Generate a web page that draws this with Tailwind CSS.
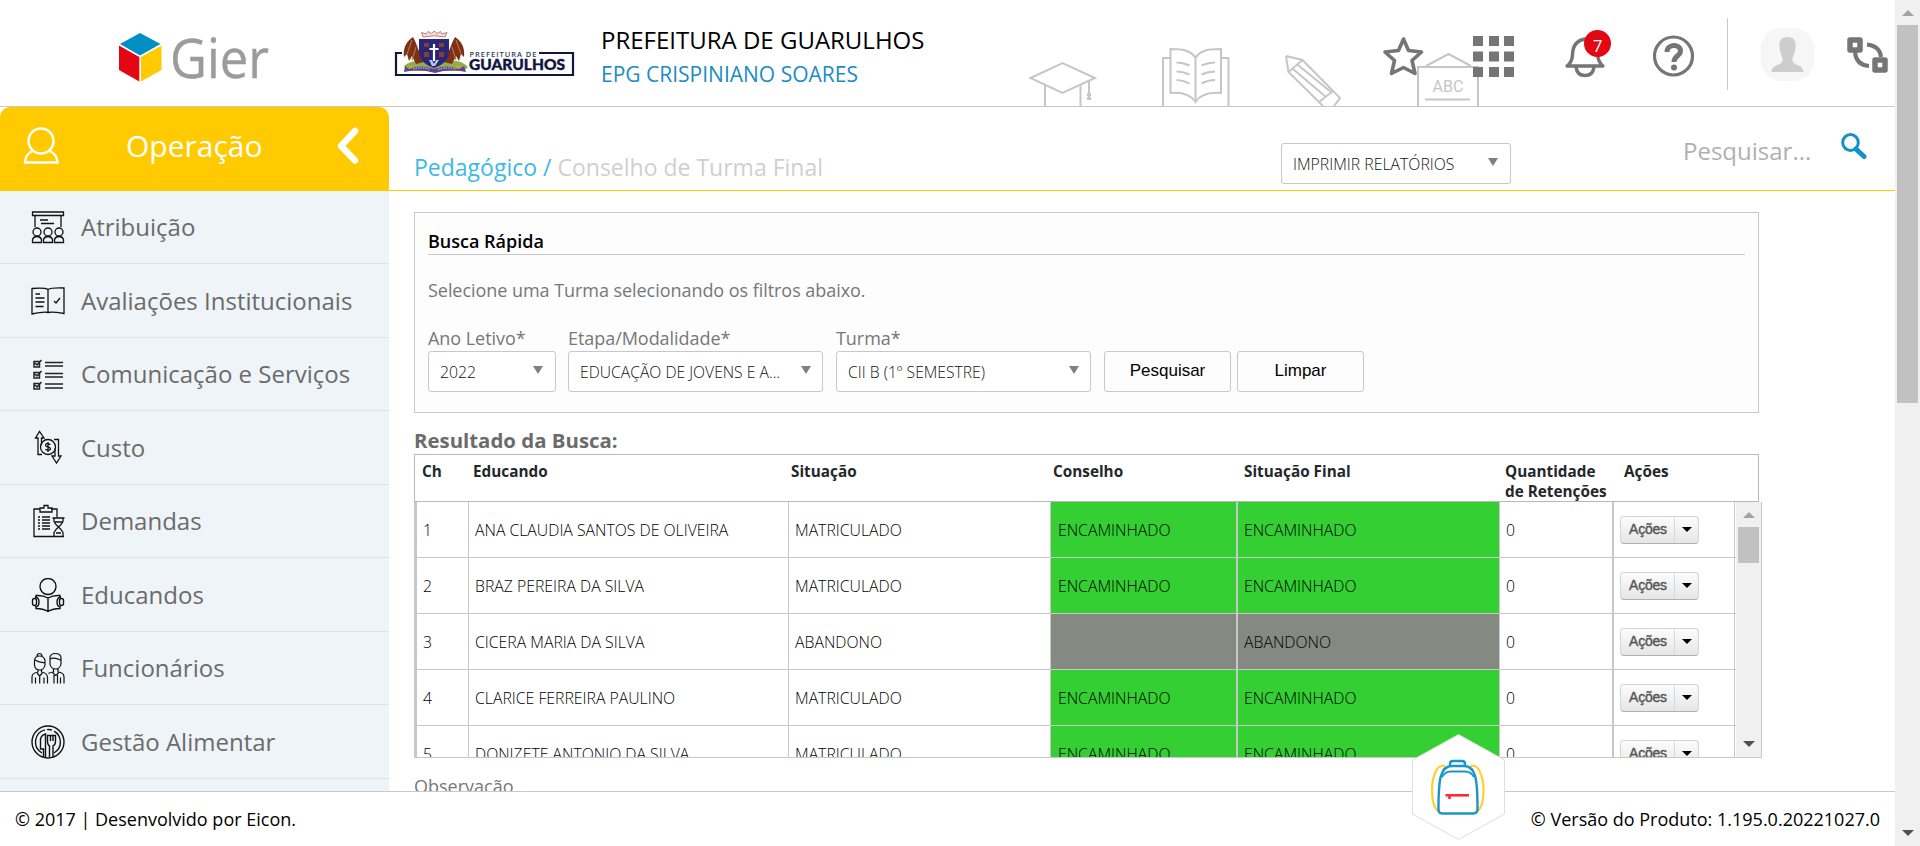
<!DOCTYPE html>
<html lang="pt-BR">
<head>
<meta charset="utf-8">
<title>Gier - Conselho de Turma Final</title>
<script src="https://cdn.jsdelivr.net/npm/@tailwindcss/browser@4"></script>
</head>
<body class="flex h-[846px] w-[1920px] overflow-hidden bg-white font-['Open_Sans','Noto_Sans',sans-serif]">
<div class="relative flex h-full w-[1895px] flex-col">

  <!-- Top bar -->
  <header class="relative flex h-[107px] shrink-0 border-b border-[#c8c8c8]">
    <!-- School line art behind the toolbar -->
    <svg class="absolute left-[1020px] top-[40px]" width="470" height="66" viewBox="1020 40 470 66" fill="none" stroke="#c6c6c6" stroke-width="2">
      <path d="M1030.500 78 L1062.500 63 L1095 78 L1062.500 93 Z M1045 85 V106 M1080.500 85 V106 M1089 81 V94 M1089 94 v6" />
      <path d="M1089 93v7" stroke-width="4" stroke-dasharray="3 1"/>
      <path d="M1195.500 58 C1191 50 1181 49 1170.500 49 V93 C1183 92 1191 95 1195.500 102 C1200 95 1209 92 1221 93 V49 C1209 49 1200 50 1195.500 58 Z M1195.500 56 V100 M1170 58 H1163 V106 M1221 58 H1228.500 V106 M1176.500 62.500 Q1183 62.500 1189.500 65.500 M1176.500 71.500 Q1183 71.500 1189.500 74.500 M1176.500 80 Q1183 80 1189.500 83.500 M1215 62.500 Q1208 62.500 1201.500 65.500 M1215 71.500 Q1208 71.500 1201.500 74.500 M1215 80 Q1208 80 1201.500 83.500"/>
      <path d="M1286 56 L1302.500 60 L1340 98 L1334 106 M1286 56 L1288.500 72 L1323 106 M1302.500 60 L1288.500 72 M1298 65 L1331 92 M1293 69 L1326 97 M1333 91 L1319 102"/>
      <path d="M1418 106 V67 H1478 V106 M1426 66 L1448.500 54 L1471 66 M1425 99.500 H1470"/>
      <text x="1432.500" y="91.500" font-family="Roboto" font-size="17" fill="#c6c6c6" stroke="none" textLength="31" lengthAdjust="spacingAndGlyphs">ABC</text>
    </svg>

    <svg class="ml-[118px] mt-8 shrink-0 overflow-visible" width="154" height="52" viewBox="118 32 154 52">
      <path d="M140 33 L160.500 44 L140 55.500 L120 44 Z" fill="#008fc5"/>
      <path d="M119 45.500 L139.300 57 V81.500 L119 70 Z" fill="#e30613"/>
      <path d="M161.500 45.500 L141 57 V81.500 L161.500 70 Z" fill="#ffcb00"/>
      <text x="170" y="78" font-family="Open Sans" font-weight="400" font-size="55" fill="#9b9b9b" stroke="#9b9b9b" stroke-width=".4" textLength="99" lengthAdjust="spacingAndGlyphs">Gier</text>
    </svg>

    <svg class="ml-[121px] mt-[29px] shrink-0" width="184" height="50" viewBox="393 29 184 50">
      <path d="M402 53 H396 V75 H573 V53 H539" fill="none" stroke="#12163f" stroke-width="2.200"/>
      <path d="M404 66 Q412 59 425 62 H447 Q459 58 468 67 L464 71 H408 Z" fill="#8fae4e"/>
      <path d="M424 62 C419 53 417 44 413 37 C405 42 403 50 404 57 L407 54 L409 61 L412 56 L416 64 Z" fill="#7a3117"/>
      <path d="M444 62 C449 53 451 44 455 37 C463 42 465 50 464 57 L461 54 L459 61 L456 56 L452 64 Z" fill="#7a3117"/>
      <path d="M412 40 L407 54 M416 47 L412 60 M456 40 L461 54 M452 47 L456 60" stroke="#bf6b38" fill="none" stroke-width="1.200"/>
      <path d="M409 66 h4 l2 5 h-6z M456 66 h4 l1 5 h-6z" fill="#d9a02c"/>
      <path d="M419 39 H449 V52 C449 61 440 66 434 68 C428 66 419 61 419 52 Z" fill="#29267a"/>
      <path d="M424 43 h5 v4 h-5z M424 52 h5 v5 h-5z M439 43 h5 v4 h-5z M439 52 h5 v5 h-5z" fill="#84402c"/>
      <path d="M434 44 V61 M429.500 49 H438.500" stroke="#fff" stroke-width="2.200"/>
      <path d="M429 60 h3 l2 4 2-4 h3 l-4 6 h-3z" fill="#b9c6df"/>
      <path d="M423 37 L421.500 32.500 L426 34 L428 31.500 L431.500 33.500 L434 31 L437 33.500 L440.500 31.500 L442 34 L447 32.500 L445 37 Q434 34.500 423 37 Z" fill="#f5dcd7" stroke="#a8665e" stroke-width=".8"/>
      <path d="M405 66 L409 69 Q420 64 434 69 Q448 64 459 69 L464 66 L466 72 Q450 68 435 73 Q419 68 404 72 Z" fill="#5d4596"/>
      <path d="M413 69 Q422 66.500 430 69.500 M438 69.500 Q448 66.500 456 69" stroke="#ded5ee" stroke-width="1" stroke-dasharray="1.500 1" fill="none"/>
      <text x="469.500" y="56.500" font-family="Open Sans" font-weight="600" font-size="7.500" fill="#34375a" textLength="67">PREFEITURA DE</text>
      <text x="469" y="69.500" font-family="Lato" font-weight="900" font-size="15.500" fill="#12163f" stroke="#12163f" stroke-width=".4" textLength="96" lengthAdjust="spacingAndGlyphs">GUARULHOS</text>
    </svg>

    <div class="ml-6 mt-[24px] flex w-[400px] flex-col whitespace-nowrap">
      <div class="h-8 text-[24px] leading-8 text-black">PREFEITURA DE GUARULHOS</div>
      <div class="mt-[2px] h-8 text-[21px] leading-8 text-[#1b8cc4]">EPG CRISPINIANO SOARES</div>
    </div>

    <div class="absolute left-[1382px] top-0 flex h-[106px] items-start">
      <svg class="mt-[35px]" width="42" height="42" viewBox="0 0 42 42" fill="none" stroke="#757575" stroke-width="3.600" stroke-linejoin="round"><path d="M21.500 4 L26.500 15.500 L39.500 17 L30 25.500 L33 38.500 L21.500 32.500 L9.500 38.500 L12.500 25.500 L3 17 L16.500 15.500 Z"/></svg>
      <svg class="ml-[49px] mt-[36px]" width="41" height="41" fill="#757575"><path d="M0 0h10v10H0z M16 0h10v10H16z M31 0h10v10H31z M0 15.500h10v10H0z M16 15.500h10v10H16z M31 15.500h10v10H31z M0 31h10v10H0z M16 31h10v10H16z M31 31h10v10H31z"/></svg>
      <div class="relative ml-[51px] mt-[29px] h-12 w-12">
        <svg class="mt-[6px]" width="42" height="44" viewBox="0 0 42 44" fill="none" stroke="#757575" stroke-width="3.400"><path d="M2 31 Q7.500 27 7.500 19 Q8 6 20 4 Q32 6 32.500 19 Q33 27 38 31 Z" stroke-linejoin="round"/><path d="M11 32 Q12 40.500 20 40.500 Q28 40.500 29 32"/></svg>
        <span class="absolute left-[19px] top-[1px] flex h-[27px] w-[27px] items-center justify-center rounded-full bg-[#e30613] pt-[3px] text-[17px] leading-none text-white">7</span>
      </div>
      <svg class="ml-[39px] mt-[35px]" width="42" height="42" viewBox="0 0 42 42" fill="none" stroke="#757575"><circle cx="21.500" cy="21" r="19" stroke-width="3.200"/><path d="M15 17 C15 8.500 28.500 8.500 28.500 16 C28.500 21 22 20.500 22 27" stroke-width="5"/><circle cx="22" cy="32.500" r="3" fill="#757575" stroke="none"/></svg>
      <div class="ml-[33px] mt-[18px] h-[72px] w-px bg-[#c8c8c8]"></div>
      <svg class="ml-[33px] mt-[28px]" width="53" height="53" viewBox="0 0 53 53"><path d="M16 0h21l11 6 5 10v21l-5 10-11 6H16L5 47 0 37V16L5 6z" fill="#f6f6f6"/><path d="M26.500 9 C17 9 18 18 19 23 C20 27 21.500 28 21.500 32 C21.500 38 10 36 10.500 44 H42.500 C42.500 36 31.500 38 31.500 32 C31.500 28 33 27 34 23 C35 18 36 9 26.500 9Z" fill="#cdcdcd"/></svg>
      <svg class="ml-[33px] mt-[37px]" width="42" height="37" viewBox="0 0 42 37" fill="none" stroke="#757575"><rect x="3" y="3" width="10" height="10" stroke-width="5.500" stroke-linejoin="round"/><rect x="28" y="23" width="10" height="10" stroke-width="5.500" stroke-linejoin="round"/><path d="M8 15 Q9 28 22 29 M20 7.500 Q33 9 34 20" stroke-width="4"/></svg>
    </div>
  </header>

  <div class="flex h-[684px] shrink-0 overflow-hidden">
    <!-- Side menu -->
    <nav class="flex h-full w-[389px] shrink-0 flex-col overflow-hidden bg-[#eff4f8] text-[24px] text-[#6b6b6b]">
      <div class="flex h-[84px] shrink-0 items-center bg-white"><div class="flex h-full w-full items-center rounded-t-[10px] bg-[#ffcb00] text-white">
        <svg class="ml-[23px] mt-[-6px]" width="37" height="38" viewBox="0 0 37 38" fill="none" stroke="#fff" stroke-width="2.400"><ellipse cx="18" cy="14" rx="12.500" ry="12.500"/><path d="M9.500 24 Q2.500 27 2 35.500 H34.500 Q34 27 26.500 24" /></svg>
        <span class="ml-[66px] mt-[-7px] w-[136px] text-[30px] leading-none">Operação</span>
        <svg class="ml-[74px] mt-[-7px]" width="24" height="38" viewBox="0 0 24 38" fill="none" stroke="#fff" stroke-width="6.500" stroke-linecap="round" stroke-linejoin="round"><path d="M19 4 L5 19 L19 33.500"/></svg>
      </div></div>

      <div class="flex h-[73px] shrink-0 items-center gap-4 border-b border-[#dbe3e9] pl-[31px]">
        <svg width="34" height="34" viewBox="0 0 34 34" fill="none" stroke="#111" stroke-width="1.300"><path d="M1.500 2h31v3.500h-31z M4 5.500V17 M30 5.500V17 M9 10h8 M10 13.500h13" /><circle cx="6" cy="22" r="4"/><circle cx="17" cy="22" r="4"/><circle cx="28" cy="22" r="4"/><path d="M1.500 32.500v-3q1-3 4.500-3t4.500 3v3z M12.500 32.500v-3q1-3 4.500-3t4.500 3v3z M23.500 32.500v-3q1-3 4.500-3t4.500 3v3z"/></svg>
        <span>Atribuição</span></div>
      <div class="flex h-[74px] shrink-0 items-center gap-4 border-b border-[#dbe3e9] pl-[31px]">
        <svg width="34" height="34" viewBox="0 0 34 34" fill="none" stroke="#111" stroke-width="1.300"><path d="M17 5.500 Q14 3.500 1 4.500 V30 Q13 27.500 17 28.500 Q21 27.500 33 29.500 V4 Q20 3.500 17 5.500 V28 M4.500 10h4.500 M4.500 14h9 M4.500 18h9 M4.500 22.500h8"/><path d="M23 17l2 2 4-5"/></svg>
        <span>Avaliações Institucionais</span></div>
      <div class="flex h-[73px] shrink-0 items-center gap-4 border-b border-[#dbe3e9] pl-[31px]">
        <svg width="34" height="34" viewBox="0 0 34 34" fill="none" stroke="#222" stroke-width="1.500"><path d="M14 5.500h18 M14 9h18 M14 16.500h18 M14 20h18 M14 27h18 M14 31h18"/><path d="M3 4.500h5.500v5.500H3z M3 15.500h5.500V21H3z M3 26.500h5.500V32H3z M4 6l2 2 4.500-5 M4 17l2 2 4.500-5 M4 28l2 2 4.500-5"/></svg>
        <span>Comunicação e Serviços</span></div>
      <div class="flex h-[74px] shrink-0 items-center gap-4 border-b border-[#dbe3e9] pl-[31px]">
        <svg class="mt-[-2px]" width="34" height="34" viewBox="0 0 34 34" fill="none" stroke="#111" stroke-width="1.300"><path d="M11 24.500H7V8H4.500L8.500 1.500 13 8H10.500V15 M23 9.500h4.500V26h2.500l-4.500 7-4.500-7h3V18.500"/><circle cx="17" cy="17" r="7.500"/><path d="M19.500 14.500q-5-2-5 .800c0 2.200 5 1.200 5 3.400 0 2.500-5 1.300-5 .300 M17 12v10"/></svg>
        <span>Custo</span></div>
      <div class="flex h-[73px] shrink-0 items-center gap-4 border-b border-[#dbe3e9] pl-[31px]">
        <svg width="34" height="34" viewBox="0 0 34 34" fill="none" stroke="#111" stroke-width="1.300"><path d="M9 5H3v27.500h30 M20 5h6v8.500 M9 8V4h4V1.500h4V4h4v4z"/><path d="M7 13h2 M11 13h8 M7 16h2 M11 16h8 M7 19h2 M11 19h8 M7 22h2 M11 22h8 M7 25h2 M11 25h8" stroke-width="1.400"/><path d="M21.500 14h12 M23 14v3.500q1.500 3 4.500 5.500 3-2.500 4.500-5.500V14 M23 32v-3.500q1.500-3 4.500-5.500 3 2.500 4.500 5.500V32 M24 18h7 M25 29h5"/></svg>
        <span>Demandas</span></div>
      <div class="flex h-[74px] shrink-0 items-center gap-4 border-b border-[#dbe3e9] pl-[31px]">
        <svg width="34" height="34" viewBox="0 0 34 34" fill="none" stroke="#111" stroke-width="1.400"><circle cx="17" cy="8.500" r="8"/><path d="M17 20Q12 17 5 17.500V20 M17 20Q22 17 29 17.500V20 M5 28v2.500Q12 30.500 17 33.500 22 30.500 29 30.500V28 M17 20v13 M5 17.500V20 M29 17.500V20"/><rect x="1.500" y="20.500" width="4" height="7" rx="2"/><rect x="28.500" y="20.500" width="4" height="7" rx="2"/><path d="M4 19q4 .500 4 5t-3 5 M30 19q-4 .500-4 5t3 5"/></svg>
        <span>Educandos</span></div>
      <div class="flex h-[73px] shrink-0 items-center gap-4 border-b border-[#dbe3e9] pl-[31px]">
        <svg width="34" height="34" viewBox="0 0 34 34" fill="none" stroke="#111" stroke-width="1.200"><path d="M3.500 14V9.500Q4 5 8.500 5t5.500 4.500V14q-1 5-5.500 5t-5-5 M6 5.500q0-3 2.500-3t2.500 3 M4 9q5 3 9.500 2.500 M7 18v3Q1 22 1 26v6.500 M10.500 18v3q5.500 1 6 5v6.500 M4.500 32.500v-6 M13 32.500v-6 M8.700 32.500V25 M6 22l2.700 3 2.700-3"/><path d="M19 13V6q1-3.500 5-3.500 6 0 6 4.500v6q-1 5-5.500 5T19 13 M19 8q4-2 10.500 1 M22.500 18v3q-4 .500-5 1.500 M27 18v3q6 .500 6 5v6.500 M23 32.500V24 M26.500 32.500V24 M29.500 32.500v-6 M21.500 21.500l3.200 3 3.200-3"/></svg>
        <span>Funcionários</span></div>
      <div class="flex h-[74px] shrink-0 items-center gap-4 border-b border-[#dbe3e9] pl-[31px]">
        <svg width="34" height="34" viewBox="0 0 34 34" fill="none" stroke="#111" stroke-width="1.400"><circle cx="17" cy="17" r="16"/><path d="M11 28A12.500 12.500 0 0 1 14 4.900 M16 4.600q3-.300 5 .600 M23 6.200A12.500 12.500 0 0 1 23 28"/><path d="M12.500 32V24H9.500V14q1-4 5-5v23 M18.500 32V21q-2-1-2-5V10.500h8V16q0 4-2.500 5v11 M19.500 10.500V16 M22 10.500V16"/></svg>
        <span>Gestão Alimentar</span></div>
    </nav>

    <!-- Content -->
    <main class="flex min-w-0 flex-1 flex-col">
      <div class="flex h-[84px] shrink-0 whitespace-nowrap border-b border-[#ffcb00]">
        <h1 class="ml-[25px] mt-[43px] w-[867px] text-[23px] leading-[34px] text-[#cfcfcf]"><span class="text-[#3cb9e5]">Pedagógico /</span> Conselho de Turma Final</h1>
        <div class="mt-[36px] flex h-[41px] w-[230px] items-center justify-between rounded-[3px] border border-[#c8c8c8] pl-[11px] pr-[12px] text-[15.8px] font-light text-[#111]"><span class="pt-[2px]">IMPRIMIR RELATÓRIOS</span><i class="mb-[3px] h-0 w-0 border-x-[5px] border-t-[8px] border-x-transparent border-t-[#808080]"></i></div>
        <div class="ml-[172px] mt-[26px] text-[24px] leading-[36px] text-[#b0b0b0]">Pesquisar...</div>
        <svg class="ml-[30px] mt-[26px]" width="26" height="27" viewBox="0 0 26 27" fill="none" stroke="#1292c8"><ellipse cx="9.500" cy="9.500" rx="7.800" ry="8" stroke-width="3"/><path d="M15 16l8 7.500" stroke-width="5" stroke-linecap="round"/></svg>
      </div>

      <section class="ml-[25px] mt-[21px] flex h-[201px] w-[1345px] shrink-0 flex-col border border-[#c8c8c8] bg-[#fdfdfd] px-[13px] text-[18px] text-[#777]">
        <h2 class="mt-[16px] h-[26px] border-b border-[#c8c8c8] font-semibold leading-[24px] text-black">Busca Rápida</h2>
        <p class="mt-[22px] leading-[26px] tracking-[-0.05px]">Selecione uma Turma selecionando os filtros abaixo.</p>
        <div class="mt-[22px] flex items-end">
          <div class="w-[128px]"><div class="leading-[26px] tracking-[-0.05px]">Ano Letivo*</div>
            <div class="flex h-[41px] items-center justify-between rounded-[3px] border border-[#c8c8c8] bg-white px-[11px] pr-[12px] text-[15.8px] font-light text-[#111]"><span class="pt-[2px]">2022</span><i class="mb-[3px] h-0 w-0 border-x-[5px] border-t-[8px] border-x-transparent border-t-[#808080]"></i></div></div>
          <div class="ml-[12px] w-[255px]"><div class="leading-[26px] tracking-[-0.05px]">Etapa/Modalidade*</div>
            <div class="flex h-[41px] items-center justify-between rounded-[3px] border border-[#c8c8c8] bg-white px-[11px] text-[15.7px] font-light text-[#111]"><span class="pt-[2px]">EDUCAÇÃO DE JOVENS E A...</span><i class="mb-[3px] h-0 w-0 border-x-[5px] border-t-[8px] border-x-transparent border-t-[#808080]"></i></div></div>
          <div class="ml-[13px] w-[255px]"><div class="leading-[26px] tracking-[-0.05px]">Turma*</div>
            <div class="flex h-[41px] items-center justify-between rounded-[3px] border border-[#c8c8c8] bg-white px-[11px] text-[15.7px] font-light text-[#111]"><span class="pt-[2px]">CII B (1º SEMESTRE)</span><i class="mb-[3px] h-0 w-0 border-x-[5px] border-t-[8px] border-x-transparent border-t-[#808080]"></i></div></div>
          <button class="ml-[13px] h-[41px] w-[127px] rounded-[3px] border border-[#c8c8c8] pb-[2px] font-['Liberation_Sans',sans-serif] text-[17px] text-black">Pesquisar</button>
          <button class="ml-[6px] h-[41px] w-[127px] rounded-[3px] border border-[#c8c8c8] pb-[2px] font-['Liberation_Sans',sans-serif] text-[17px] text-black">Limpar</button>
        </div>
      </section>

      <h3 class="ml-[25px] mt-[14px] h-[26px] shrink-0 text-[20.4px] font-bold leading-[26px] text-[#6b6b6b]">Resultado da Busca:</h3>

      <div class="ml-[25px] mt-[1px] flex h-[48px] w-[1345px] shrink-0 border border-[#b8b8b8] pt-[6px] text-[15.3px] font-bold leading-[20px] text-[#24272b]">
        <div class="ml-[7px] w-[51px]">Ch</div>
        <div class="w-[318px]">Educando</div>
        <div class="w-[262px]">Situação</div>
        <div class="w-[191px]">Conselho</div>
        <div class="w-[261px]">Situação Final</div>
        <div class="w-[119px] whitespace-nowrap">Quantidade<br>de Retenções</div>
        <div>Ações</div>
      </div>

      <div class="ml-[25px] flex h-[256px] w-[1348px] shrink-0 border-b border-l-[3px] border-r border-[#c8c8c8]">
        <div id="rows" class="h-full w-[1319px] overflow-hidden"></div>
        <div class="flex w-[25px] flex-col items-center justify-between bg-[#f0f0f0] pb-[10px] pt-[10px]">
          <i class="h-0 w-0 border-x-[6px] border-b-[6px] border-x-transparent border-b-[#a3a3a3]"></i>
          <i class="mb-auto mt-[9px] h-[36px] w-[21px] bg-[#c1c1c1]"></i>
          <i class="h-0 w-0 border-x-[6px] border-t-[6px] border-x-transparent border-t-[#505050]"></i>
        </div>
      </div>
      <div class="ml-[25px] mt-[15px] shrink-0 text-[18px] leading-[27px] text-[#777]">Observação</div>
    </main>
  </div>

  <footer class="flex h-[55px] shrink-0 justify-between border-t border-[#c8c8c8] bg-white px-[15px] pt-[14px] text-[18px] leading-[26px] text-black">
    <span>© 2017 | Desenvolvido por Eicon.</span><span>© Versão do Produto: 1.195.0.20221027.0</span>
  </footer>

  <!-- Floating backpack shortcut -->
  <svg class="absolute left-[1411px] top-[733px]" width="95" height="108" viewBox="1411 733 95 108" fill="none">
    <path d="M1458.500 734.500 L1504.500 760 V814 L1458.500 839.500 L1412.500 814 V760 Z" fill="#fff" stroke="#dedede"/>
    <path d="M1446 767 C1437 761 1432 778 1432 790 C1432 802 1435 811 1440 812 M1469.500 767 C1478.500 761 1483.500 778 1483.500 790 C1483.500 802 1480.500 811 1475.500 812" stroke="#ffd02e" stroke-width="2.200"/>
    <path d="M1450 766 V764 Q1450 761 1453 761 H1462 Q1465 761 1465 764 V766" stroke="#1a95c9" stroke-width="2.400"/>
    <path d="M1442 813.500 Q1438.500 813.500 1438.500 809 C1438.500 780 1440 766 1452 766 H1464 C1476 766 1477.500 780 1477.500 809 Q1477.500 813.500 1473.500 813.500 Z" stroke="#1a95c9" stroke-width="2.400"/>
    <path d="M1442 777 Q1445 771.500 1451 771.500 H1465 Q1471 771.500 1474 777" stroke="#1a95c9" stroke-width="2"/>
    <path d="M1445.500 795.300 H1469" stroke="#ff2a37" stroke-width="2.600"/><path d="M1449.500 796 v3" stroke="#ff2a37" stroke-width="2.600"/>
  </svg>
</div>

<!-- Page scrollbar -->
<div class="flex h-full w-[25px] flex-col items-center bg-[#f0f0f0] pb-[10px] pt-[10px]">
  <i class="h-0 w-0 border-x-[6px] border-b-[6px] border-x-transparent border-b-[#a3a3a3]"></i>
  <i class="mb-auto mt-[9px] h-[378px] w-[21px] bg-[#c1c1c1]"></i>
  <i class="h-0 w-0 border-x-[6px] border-t-[6px] border-x-transparent border-t-[#505050]"></i>
</div>

<script>
const students = [
  ["ANA CLAUDIA SANTOS DE OLIVEIRA", "MATRICULADO", "ENCAMINHADO", "ENCAMINHADO"],
  ["BRAZ PEREIRA DA SILVA", "MATRICULADO", "ENCAMINHADO", "ENCAMINHADO"],
  ["CICERA MARIA DA SILVA", "ABANDONO", "", "ABANDONO"],
  ["CLARICE FERREIRA PAULINO", "MATRICULADO", "ENCAMINHADO", "ENCAMINHADO"],
  ["DONIZETE ANTONIO DA SILVA", "MATRICULADO", "ENCAMINHADO", "ENCAMINHADO"]
];
document.getElementById("rows").innerHTML = students.map((s, i) => {
  const tone = s[2] ? "bg-[#33cf33]" : "bg-[#848a82]";
  return `<div class="flex h-[56px] border-b border-[#c8c8c8] text-[15.8px] font-light leading-[57px] text-black">
    <div class="w-[52px] shrink-0 border-r border-[#c8c8c8] pl-[6px]">${i + 1}</div>
    <div class="w-[320px] shrink-0 border-r border-[#c8c8c8] pl-[6px]">${s[0]}</div>
    <div class="w-[262px] shrink-0 border-r border-[#c8c8c8] pl-[6px]">${s[1]}</div>
    <div class="w-[187px] shrink-0 border-r-2 border-[#c8c8c8] pl-[7px] ${tone}">${s[2]}</div>
    <div class="w-[262px] shrink-0 border-r border-[#c8c8c8] pl-[6px] ${tone}">${s[3]}</div>
    <div class="w-[114px] shrink-0 border-r-2 border-[#c8c8c8] pl-[6px]">0</div>
    <div class="flex w-[121px] shrink-0 items-center border-r border-[#c8c8c8] pl-[6px]">
      <div class="flex h-[28px] w-[79px] rounded-[4px] border border-[#d4d4d4] border-b-[#b0b0b0] bg-linear-to-b from-[#fcfcfc] to-[#e6e6e6]">
        <div class="w-[54px] border-r border-[#dadada] pl-[8px] font-['Liberation_Sans',sans-serif] text-[14px] font-normal leading-[24px] tracking-[-0.2px] text-[#555] [-webkit-text-stroke:0.4px_#555]">Ações</div>
        <div class="flex flex-1 items-center justify-center"><i class="h-0 w-0 border-x-[5px] border-t-[5px] border-x-transparent border-t-black"></i></div>
      </div>
    </div>
  </div>`;
}).join("");
</script>
</body>
</html>
